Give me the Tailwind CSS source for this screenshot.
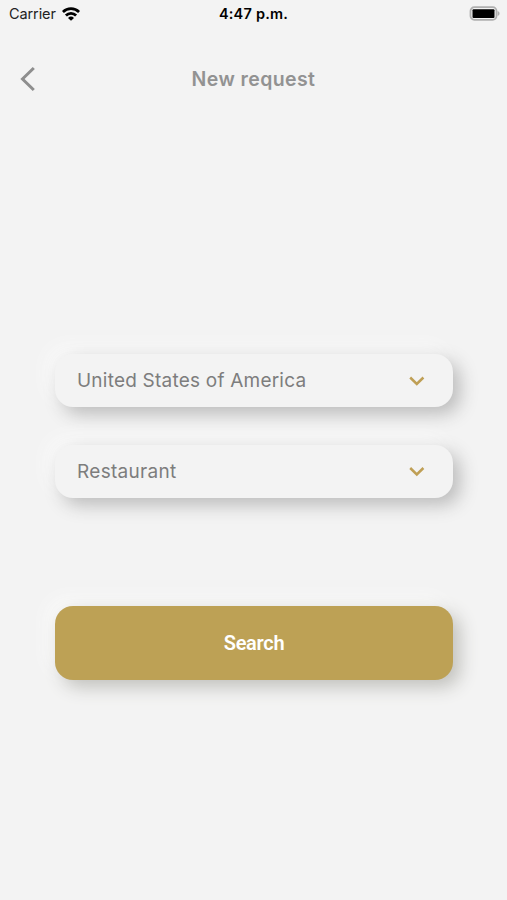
<!DOCTYPE html>
<html lang="en">

<head>
  <meta charset="UTF-8" />
  <meta name="viewport" content="width=device-width, initial-scale=1.0" />
  <title>New request</title>
  <script src="https://cdn.jsdelivr.net/npm/@tailwindcss/browser@4"></script>
</head>

<body class="h-screen overflow-hidden bg-[#f3f3f3] font-['Inter',sans-serif]">
  <!-- Status bar -->
  <div class="grid grid-cols-3 items-center h-7 pl-[9px] pr-[7px] text-[14.5px] text-black">
    <div class="flex items-center gap-[6px] text-[#222]">
      <span class="tracking-[-0.1px]">Carrier</span>
      <svg class="w-[18px] h-[14px]" viewBox="0 0 18 14" fill="none" stroke="#000" stroke-width="2.8">
        <path d="M.9 5a11.400 11.400 0 0 1 16.200 0" />
        <path d="M3.900 8.500a7.200 7.200 0 0 1 10.200 0" />
        <path d="M9 13.800 6 10.900a4.300 4.300 0 0 1 6 0Z" fill="#000" stroke="none" />
      </svg>
    </div>
    <span class="-ml-0.5 text-center font-semibold tracking-[0.2px] whitespace-nowrap">4:47 p.m.</span>
    <svg class="justify-self-end w-[31px] h-[16px]" viewBox="0 0 31 16">
      <rect x="1.5" y="1.200" width="26" height="12.600" rx="3.800" fill="none" stroke="#b0b0b0" stroke-width="1.800" />
      <rect x="3.500" y="3.200" width="22" height="8.800" rx="1" fill="#000" />
      <path d="M28.600 5c2.600 1.200 2.600 3.800 0 5Z" fill="#b0b0b0" />
    </svg>
  </div>

  <!-- Header -->
  <header class="grid grid-cols-[40px_1fr_40px] items-center h-[102px] px-[18px]">
    <button aria-label="Back">
      <svg class="w-5 h-[26px]" viewBox="0 0 20 26" fill="none" stroke="#8e8e8e" stroke-width="3">
        <path d="M15.800 2 4.500 13l11.300 11" />
      </svg>
    </button>
    <h1 class="pt-0.5 text-center text-[19.5px] font-semibold tracking-[0.4px] text-[#929292]">New request</h1>
  </header>

  <main class="flex flex-col pt-[224px] pl-[55px] pr-[54px]">
    <button
      class="flex items-center justify-between h-[53px] pl-[22px] pr-[27px] rounded-[18px] bg-[#f3f3f3] shadow-[7px_7px_18px_#bbbbbb,-7px_-7px_18px_#fafafa]">
      <span class="pt-0.5 text-[19px] tracking-[0.22px] text-[#7d7d7d]">United States of America</span>
      <svg class="w-[18px] h-[12px]" viewBox="0 0 18 12" fill="none" stroke="#bf9f55" stroke-width="2.500">
        <path d="m2.200 2.500 6.600 6.400 6.600-6.400" />
      </svg>
    </button>

    <button
      class="flex items-center justify-between h-[53px] mt-[38px] pl-[22px] pr-[27px] rounded-[18px] bg-[#f3f3f3] shadow-[7px_7px_18px_#bbbbbb,-7px_-7px_18px_#fafafa]">
      <span class="pt-0.5 text-[19px] tracking-[0.3px] text-[#7d7d7d]">Restaurant</span>
      <svg class="w-[18px] h-[12px]" viewBox="0 0 18 12" fill="none" stroke="#bf9f55" stroke-width="2.500">
        <path d="m2.200 2 6.600 6.400 6.600-6.400" />
      </svg>
    </button>

    <button
      class="h-[74px] mt-[108px] rounded-[18px] bg-[#bda155] font-['Roboto',sans-serif] text-[20px] font-semibold tracking-[-0.3px] text-white shadow-[7px_7px_18px_#c0c0bc,-7px_-7px_18px_#fafafa]">
      Search
    </button>
  </main>
</body>

</html>
